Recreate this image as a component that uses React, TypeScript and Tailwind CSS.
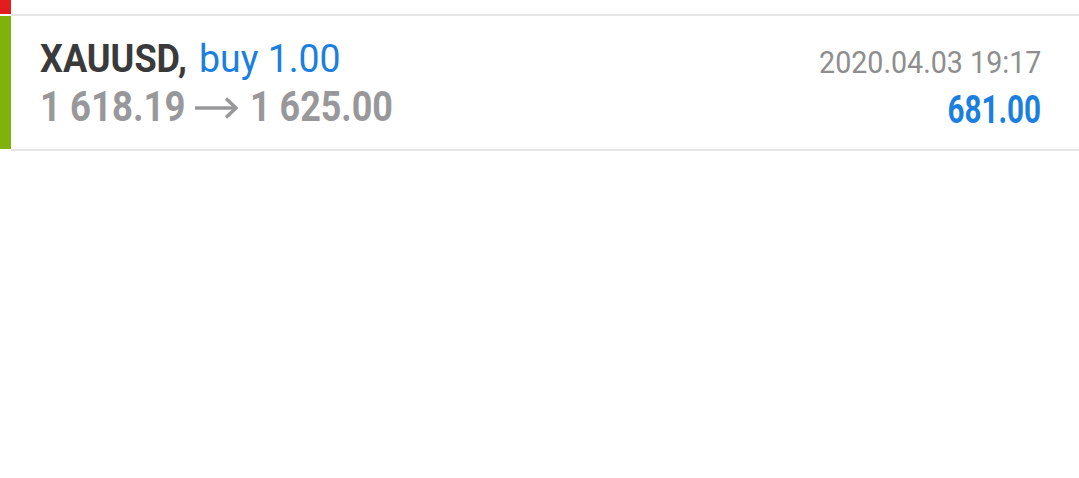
import React from "react";

export default function App() {
  return (
    <div className="w-[1079px] h-[478px] bg-white overflow-hidden" style={{ fontFamily: "Roboto, 'Noto Sans', sans-serif" }}>
      <div className="flex h-[14px]">
        <div className="w-[11px] bg-[#e11d1d]" />
        <div className="flex-1" />
      </div>
      <div className="ml-[11px] h-[2px] bg-[#e6e6e6]" />
      <div className="flex h-[133px]">
        <div className="w-[11px] bg-[#7fb20a]" />
        <div className="flex-1 flex justify-between pl-[29px] pr-[38px]">
          <div className="pt-[19px] flex flex-col">
            <div className="h-[48px] leading-[48px] text-[39px] font-bold flex whitespace-nowrap">
              <span className="block w-[159px] text-[#3a3a3a] origin-left scale-x-[0.925]">XAUUSD,</span>
              <span className="block text-[#1a7fe0] font-normal origin-left scale-x-[0.96]">buy 1.00</span>
            </div>
            <div className="h-[48px] leading-[48px] text-[42px] font-bold text-[#98989b] whitespace-nowrap flex items-center">
              <span className="block w-[145px] origin-left scale-x-[0.87]">1 618.19</span>
              <svg className="ml-[10px] mt-[1px]" width="43" height="22" viewBox="0 0 43 22" fill="none">
                <path d="M0 11 H41" stroke="#98989b" strokeWidth="3.5" />
                <path d="M31 1.5 L41 11 L31 20.5" stroke="#98989b" strokeWidth="3.5" strokeLinejoin="miter" />
              </svg>
              <span className="block ml-[12px] w-[142px] origin-left scale-x-[0.855]">1 625.00</span>
            </div>
          </div>
          <div className="pt-[22px] flex flex-col items-end">
            <div className="h-[48px] leading-[48px] text-[32px] text-[#8e8e8e] whitespace-nowrap origin-right scale-x-[0.895]">
              2020.04.03 19:17
            </div>
            <div className="h-[48px] leading-[48px] text-[38px] font-bold text-[#1a7fe0] whitespace-nowrap origin-right scale-x-[0.78]">
              681.00
            </div>
          </div>
        </div>
      </div>
      <div className="ml-[11px] h-[2px] bg-[#e6e6e6]" />
    </div>
  );
}
